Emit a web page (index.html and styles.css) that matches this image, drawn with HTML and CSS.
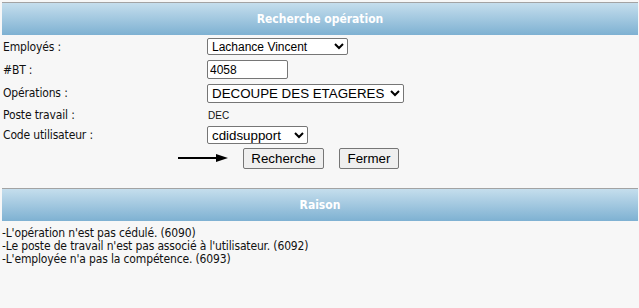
FILE: index.html
```html
<!DOCTYPE html>
<html lang="fr">
<head>
<meta charset="utf-8">
<title>Recherche opération</title>
<link rel="stylesheet" href="styles.css">
</head>
<body>
<div class="page">
  <div class="bar">Recherche opération</div>
  <div class="form">
    <div class="row r1">
      <div class="label">Employés :</div>
      <select class="sel sel-emp"><option>Lachance Vincent</option></select>
    </div>
    <div class="row r2">
      <div class="label">#BT :</div>
      <input class="inp" type="text" value="4058">
    </div>
    <div class="row r3">
      <div class="label">Opérations :</div>
      <select class="sel sel-op"><option>DECOUPE DES ETAGERES</option></select>
    </div>
    <div class="row r4">
      <div class="label">Poste travail :</div>
      <div class="val">DEC</div>
    </div>
    <div class="row r5">
      <div class="label">Code utilisateur :</div>
      <select class="sel sel-code"><option>cdidsupport</option></select>
    </div>
    <div class="row actions">
      <svg class="arrow" width="50" height="10" viewBox="0 0 50 10">
        <rect x="0" y="4" width="40" height="2" fill="#000"/>
        <polygon points="38,1 50,5 38,9" fill="#000"/>
      </svg>
      <button class="btn btn-search" type="button">Recherche</button>
      <button class="btn btn-close" type="button">Fermer</button>
    </div>
  </div>
  <div class="bar bar2">Raison</div>
  <div class="msgs">
    <div>-L'opération n'est pas cédulé. (6090)</div>
    <div>-Le poste de travail n'est pas associé à l'utilisateur. (6092)</div>
    <div>-L'employée n'a pas la compétence. (6093)</div>
  </div>
</div>
</body>
</html>
```
FILE: styles.css
```css
html, body {
  margin: 0;
  padding: 0;
  background: #f7f7f7;
}
body {
  font-family: "DejaVu Sans Condensed", "DejaVu Sans", sans-serif;
  font-stretch: condensed;
  font-size: 12px;
  color: #111;
}
.page {
  padding: 2px 1px 0 2px;
}
.bar {
  border-top: 1px solid #a3a3a3;
  background: linear-gradient(to bottom, #c5deed 0%, #7eb1d2 100%);
  color: #fff;
  font-weight: bold;
  font-size: 12px;
  display: flex;
  align-items: center;
  justify-content: center;
  box-sizing: border-box;
  height: 33px;
}
.form {
  display: flex;
  flex-direction: column;
}
.row {
  display: flex;
  align-items: center;
}
.r1 { height: 23px; }
.r2 { height: 23px; }
.r3 { height: 24px; }
.r4 { height: 20px; }
.r5 { height: 20px; }
.actions { height: 26px; padding-left: 176px; }
.label {
  width: 205px;
  padding-left: 1px;
  box-sizing: border-box;
  letter-spacing: -0.15px;
}
.sel, .inp, .btn {
  font-family: "Liberation Sans", Arial, sans-serif;
  color: #000;
  box-sizing: border-box;
  margin: 0;
}
.sel {
  background: #fff;
  border: 1px solid #767676;
  border-radius: 2px;
}
.sel-emp { width: 141px; height: 17px; font-size: 12px; }
.sel-op { width: 197px; height: 19px; font-size: 13.33px; }
.sel-code { width: 101px; height: 18px; font-size: 13.33px; }
.inp {
  width: 81px;
  height: 19px;
  font-size: 12px;
  border: 1px solid #767676;
  border-radius: 2px;
  background: #fff;
  padding: 1px 2px;
}
.val {
  font-family: "Liberation Sans", Arial, sans-serif;
  font-size: 10px;
  padding-left: 1px;
}
.arrow {
  display: block;
  margin-right: 15px;
}
.btn {
  height: 21px;
  font-size: 13.33px;
  background: #efefef;
  border: 1px solid #767676;
  border-radius: 2px;
  padding: 0 6px;
}
.btn-search { width: 81px; }
.btn-close { width: 60px; margin-left: 15px; }
.bar2 {
  margin-top: 17px;
}
.msgs {
  padding-top: 6px;
  line-height: 13px;
  letter-spacing: -0.15px;
}
```
